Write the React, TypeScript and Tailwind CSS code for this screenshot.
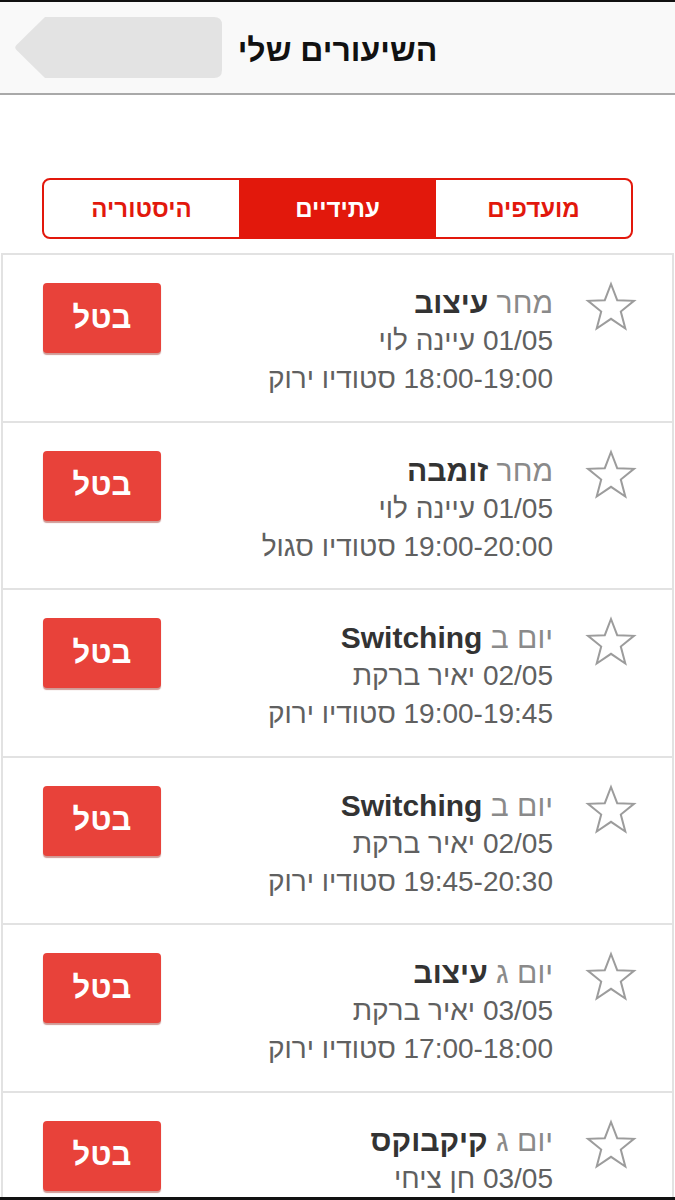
import React from 'react'

type Lesson = {
  day: string
  name: string
  teacher: string
  time: string
}

const lessons: Lesson[] = [
  { day: 'מחר', name: 'עיצוב', teacher: '01/05 עיינה לוי', time: '18:00-19:00 סטודיו ירוק' },
  { day: 'מחר', name: 'זומבה', teacher: '01/05 עיינה לוי', time: '19:00-20:00 סטודיו סגול' },
  { day: 'יום ב', name: 'Switching', teacher: '02/05 יאיר ברקת', time: '19:00-19:45 סטודיו ירוק' },
  { day: 'יום ב', name: 'Switching', teacher: '02/05 יאיר ברקת', time: '19:45-20:30 סטודיו ירוק' },
  { day: 'יום ג', name: 'עיצוב', teacher: '03/05 יאיר ברקת', time: '17:00-18:00 סטודיו ירוק' },
  { day: 'יום ג', name: 'קיקבוקס', teacher: '03/05 חן ציחי', time: '18:00-19:00 סטודיו ירוק' },
]

const Star = () => (
  <svg width="52" height="52" viewBox="0 0 52 52" className="shrink-0">
    <polygon
      points="26,3 32.2,19.2 49,19.8 35.8,30.6 40.3,47.5 26,37.8 11.7,47.5 16.2,30.6 3,19.8 19.8,19.2"
      fill="none"
      stroke="#9c9c9c"
      strokeWidth="2"
      strokeLinejoin="miter"
    />
  </svg>
)

const BackButton = () => (
  <svg width="208" height="61" viewBox="0 0 208 61">
    <path
      d="M31 0 H200 Q208 0 208 8 V53 Q208 61 200 61 H31 L2.5 33 Q0 30.5 2.5 28 Z"
      fill="#e3e3e3"
    />
  </svg>
)

function LessonRow({ lesson }: { lesson: Lesson }) {
  return (
    <div className="flex h-[167.5px] shrink-0 items-start border-t-2 border-[#e2e2e2] pt-[26px] pr-[35px] pl-[40px]">
      <Star />
      <div className="mr-[32px] flex flex-1 flex-col pt-[3px] text-[28px] leading-[38px] text-[#606060]">
        <p className="text-[30px]">
          <span className="text-[#8a8a8a]">{lesson.day}</span>{' '}
          <span className="font-bold text-[#333]">{lesson.name}</span>
        </p>
        <p>{lesson.teacher}</p>
        <p>{lesson.time}</p>
      </div>
      <button className="mt-[2px] flex h-[70px] w-[118px] shrink-0 items-center justify-center rounded-[4px] bg-[#e8423a] text-[31px] font-bold text-white shadow-[0_2px_1px_rgba(150,30,20,0.45)]">
        בטל
      </button>
    </div>
  )
}

export default function App() {
  const tabs = ['מועדפים', 'עתידיים', 'היסטוריה']
  const active = 1

  return (
    <div
      className="flex h-[1200px] flex-col overflow-hidden border-t-2 border-b-[3px] border-[#111] bg-white"
      style={{ fontFamily: '"Liberation Sans", "Noto Sans", Arial, sans-serif' }}
    >
      <header className="grid h-[93px] shrink-0 grid-cols-[1fr_auto_1fr] items-center border-b-2 border-[#a9a9a9] bg-[#f9f9f9]">
        <div className="flex pl-[14px]">
          <BackButton />
        </div>
        <h1 dir="rtl" className="pt-[4px] text-[32px] font-bold text-[#111]">
          השיעורים שלי
        </h1>
        <div />
      </header>

      <main dir="rtl" className="flex min-h-0 flex-1 flex-col">
        <div className="mx-[42px] mt-[83px] flex h-[61px] shrink-0 overflow-hidden rounded-[8px] border-2 border-[#e2180c]">
          {tabs.map((tab, i) => (
            <div
              key={tab}
              className={
                i === active
                  ? 'flex flex-1 items-center justify-center bg-[#e2180c] text-[24px] font-bold text-white'
                  : i === 0
                    ? 'flex flex-1 items-center justify-center border-l border-[#e2180c] text-[24px] font-bold text-[#e2180c]'
                    : 'flex flex-1 items-center justify-center border-r border-[#e2180c] text-[24px] font-bold text-[#e2180c]'
              }
            >
              {tab}
            </div>
          ))}
        </div>

        <div className="mx-[1px] mt-[14px] flex min-h-0 flex-1 flex-col overflow-hidden border-x-2 border-[#e2e2e2]">
          {lessons.map((lesson, i) => (
            <LessonRow key={i} lesson={lesson} />
          ))}
        </div>
      </main>
    </div>
  )
}
